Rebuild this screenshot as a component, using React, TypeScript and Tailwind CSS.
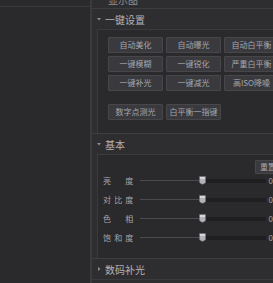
import React from 'react';

const font = { fontFamily: '"Noto Sans CJK SC", "Noto Sans", sans-serif' };

const quickButtons = [
  '自动美化', '自动曝光', '自动白平衡',
  '一键模糊', '一键锐化', '严重白平衡',
  '一键补光', '一键减光', '高ISO降噪',
];

const sliders = [
  { label: ['亮', '度'], value: 0 },
  { label: ['对', '比', '度'], value: 0 },
  { label: ['色', '相'], value: 0 },
  { label: ['饱', '和', '度'], value: 0 },
];

// Section header row with a small triangle
const SectionHeader = ({ title, open }: { title: string; open: boolean }) => (
  <div className="flex h-[20px] shrink-0 items-center gap-[4px] pl-[5px] text-[10px] text-[#b4b3b6]">
    <svg width="4" height="4" viewBox="0 0 4 4" className="shrink-0">
      {open ? <path d="M0 1 H4 L2 3.5 Z" fill="#8d8c90" /> : <path d="M1 0 V4 L3.5 2 Z" fill="#8d8c90" />}
    </svg>
    <span>{title}</span>
  </div>
);

const QuickButton = ({ text }: { text: string }) => (
  <div className="flex h-[16px] w-[55px] shrink-0 items-center justify-center rounded-[1px] border border-[#474649] bg-[#3a393d] text-[8px] leading-none text-[#a6a5a9] whitespace-nowrap">
    {text}
  </div>
);

const Slider = ({ label, value }: { label: string[]; value: number }) => (
  <div className="flex h-[19px] items-center">
    <div className="flex w-[31px] justify-between text-[8px] text-[#a6a5a9]">
      {label.map((c, i) => (
        <span key={i}>{c}</span>
      ))}
    </div>
    <div className="ml-[7px] flex w-[128px] items-center">
      <div className="h-[1px] w-[59px] bg-[#4b4a4e]" />
      {/* thumb */}
      <svg width="7" height="10" viewBox="0 0 7 10" className="shrink-0">
        <path d="M0.5 0.5 H6.5 V6.5 Q3.5 10 0.5 6.5 Z" fill="#b3b2b6" stroke="#77767b" strokeWidth="0.6" />
        <rect x="1" y="1" width="5" height="2" fill="#d6d5d9" />
      </svg>
      <div className="h-[4px] flex-1 rounded-[1px] bg-[#1f1e21]" />
    </div>
    <span className="ml-[3px] text-[8px] text-[#a6a5a9]">{value}</span>
  </div>
);

export default function App() {
  return (
    <div className="flex h-[283px] w-[273px] overflow-hidden bg-[#2b2a2d]" style={font}>
      {/* left panel */}
      <div className="flex w-[90px] shrink-0 flex-col bg-[#2a292c]">
        <div className="h-[7px] border-b border-[#3a393d]" />
      </div>
      <div className="w-[2px] shrink-0 bg-[#3b3a3e]" />

      {/* right panel */}
      <div className="flex w-[181px] shrink-0 flex-col overflow-hidden bg-[#2e2d30]">
        <div className="flex h-[9px] shrink-0 items-end overflow-hidden border-b border-[#3d3c40] pl-[16px]">
          <span className="mb-[3px] text-[10px] leading-none text-[#8e8d91]">显示图</span>
        </div>

        <SectionHeader title="一键设置" open />
        <div className="ml-[5px] flex h-[104px] shrink-0 flex-col border-l border-t border-[#3a393d] bg-[#2a292c] pl-[10px] pt-[7px]">
          <div className="grid w-[171px] grid-cols-[55px_55px_55px] gap-x-[3px] gap-y-[3px]">
            {quickButtons.map((b) => (
              <QuickButton key={b} text={b} />
            ))}
          </div>
          <div className="mt-[13px] flex gap-[3px]">
            <QuickButton text="数字点测光" />
            <QuickButton text="白平衡一指键" />
          </div>
        </div>
        <div className="h-[1px] shrink-0 bg-[#3e3d41]" />

        <SectionHeader title="基本" open />
        <div className="ml-[5px] flex h-[104px] shrink-0 flex-col border-l border-t border-[#3a393d] bg-[#2a292c] pl-[5px] pt-[5px]">
          <div className="flex justify-end">
            <div className="-mr-[12px] flex h-[14px] w-[30px] items-center justify-start rounded-[1px] border border-[#474649] bg-[#3a393d] pl-[4px] text-[8px] text-[#a6a5a9]">
              重置
            </div>
          </div>
          <div className="mt-[-3px] flex flex-col">
            {sliders.map((s, i) => (
              <Slider key={i} label={s.label} value={s.value} />
            ))}
          </div>
        </div>
        <div className="h-[1px] shrink-0 bg-[#3e3d41]" />

        <SectionHeader title="数码补光" open={false} />
        <div className="h-[1px] shrink-0 bg-[#3a393d]" />
      </div>
    </div>
  );
}
